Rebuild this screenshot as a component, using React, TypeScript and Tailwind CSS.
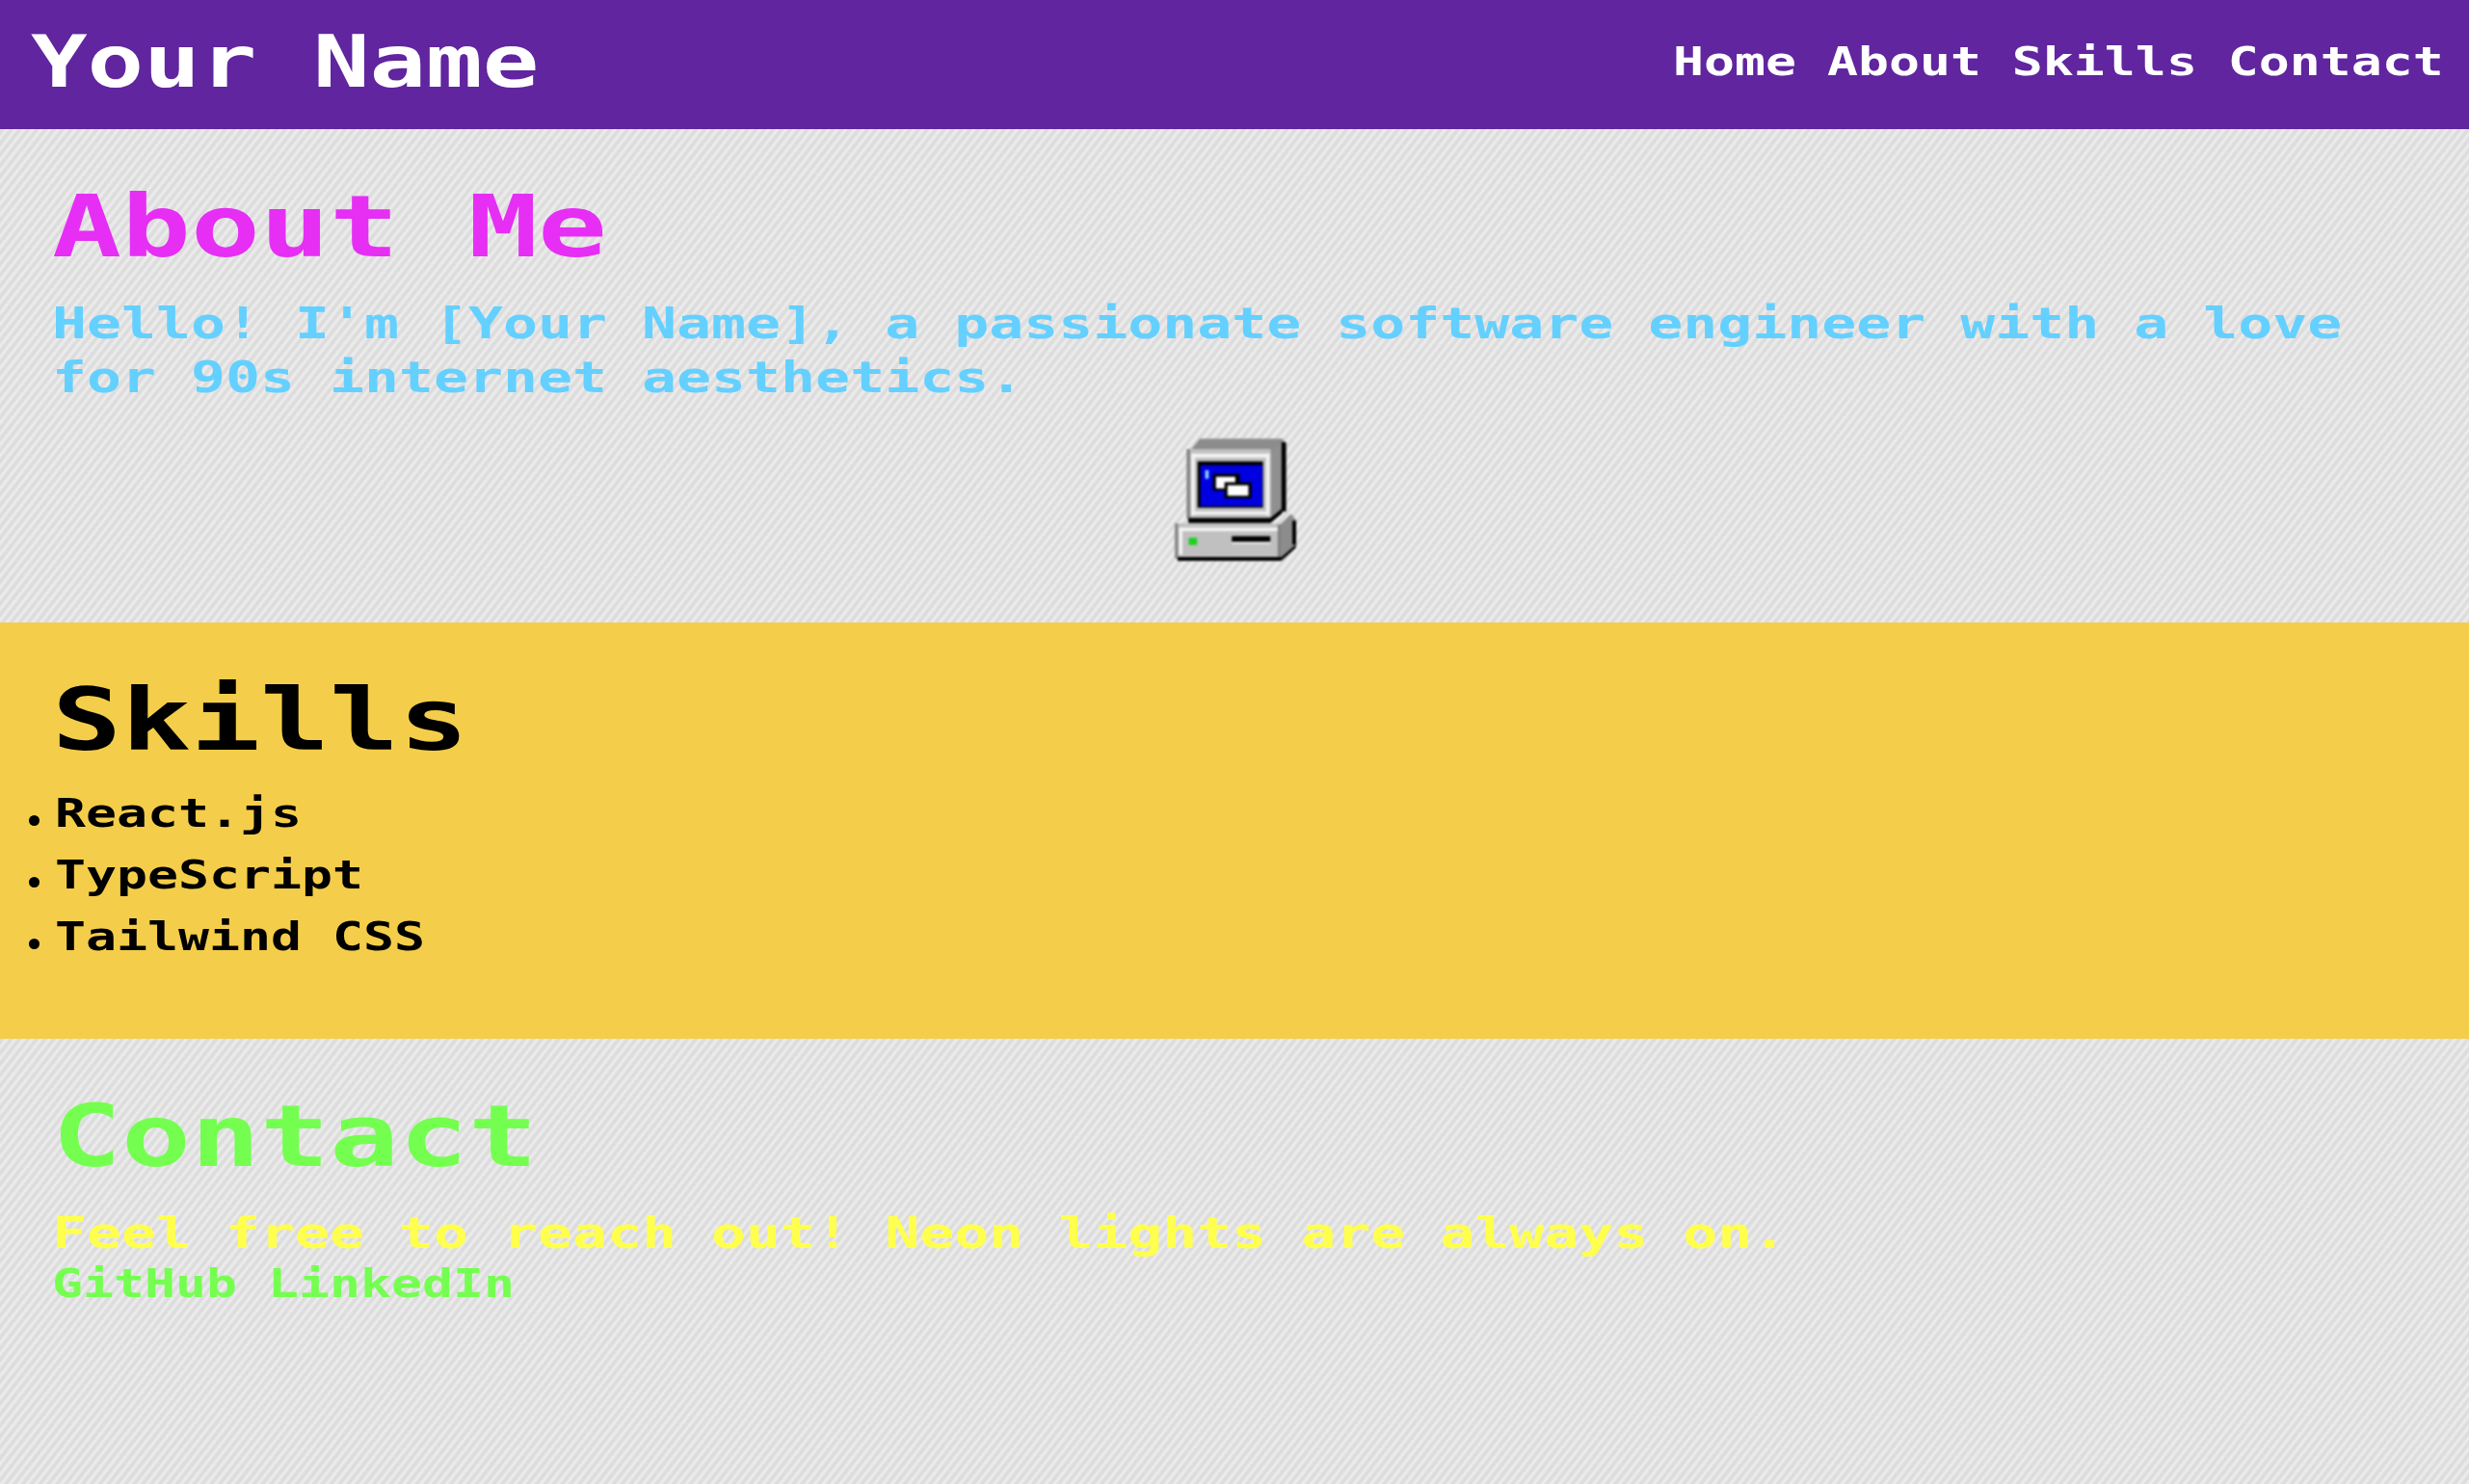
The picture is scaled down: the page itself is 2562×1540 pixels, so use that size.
const pixelFont = "font-['DejaVu_Sans_Mono','Liberation_Mono',monospace] font-bold";

function ComputerIcon() {
  return (
    <svg viewBox="0 0 32 32" className="w-[128px] h-[128px] blur-[1.2px]">
      {/* monitor */}
      <polygon points="7,0.3 28.5,0.3 29,1.5 25.5,4 4,4" fill="#8c8c8c" />
      <polygon points="25.3,3.6 28.3,1.2 28.3,18.8 25.3,21.5" fill="#909090" />
      <rect x="28.2" y="1.2" width="1.2" height="18" fill="#000" />
      <rect x="3.6" y="3" width="21.8" height="18" fill="#c0c0c0" />
      <rect x="3.6" y="3" width="0.9" height="18" fill="#868686" />
      <rect x="4.8" y="4.2" width="20.3" height="1" fill="#f4f4f4" />
      <rect x="4.8" y="4.2" width="0.9" height="16" fill="#f4f4f4" />
      <rect x="24.2" y="4.2" width="0.9" height="16" fill="#f4f4f4" />
      <rect x="4.8" y="19.2" width="20" height="0.8" fill="#f4f4f4" />
      <rect x="6.4" y="6.2" width="17" height="12" fill="#000" />
      <rect x="7.2" y="7.2" width="16" height="10.6" fill="#0000e0" />
      <rect x="8.4" y="8.5" width="0.9" height="2.2" fill="#8ad4ff" />
      <rect x="10.4" y="9.4" width="7" height="4.4" fill="#000" />
      <rect x="11.2" y="10.2" width="5" height="3" fill="#fff" />
      <rect x="13.4" y="11.6" width="7" height="4.2" fill="#000" />
      <rect x="14.2" y="12.4" width="5.4" height="2.7" fill="#fff" />
      <polygon points="4,20.9 25.3,20.9 28.4,18.4 28.4,19.6 25.3,22.2 4,22.2" fill="#000" />
      {/* base */}
      <polygon points="27.8,22.6 30.6,19.8 32,21.4 32,28 28,31.6" fill="#8c8c8c" />
      <rect x="31" y="21.6" width="1" height="6.2" fill="#000" />
      <polygon points="28,31.2 31.9,27.8 31.9,28.6 28.3,31.9" fill="#000" />
      <rect x="0.5" y="22.3" width="27.5" height="9" fill="#c0c0c0" />
      <rect x="0.5" y="22.3" width="0.9" height="9" fill="#8a8a8a" />
      <rect x="1.6" y="23.4" width="26.2" height="0.9" fill="#f4f4f4" />
      <rect x="1.6" y="23.4" width="0.9" height="7" fill="#f4f4f4" />
      <rect x="27.2" y="22.6" width="0.8" height="8.4" fill="#808080" />
      <rect x="1.2" y="31" width="27" height="1" fill="#000" />
      <rect x="4.1" y="26" width="2.2" height="1.9" fill="#20d020" />
      <rect x="15.3" y="25.6" width="10" height="1.5" fill="#000" />
      <rect x="15.3" y="27.1" width="10" height="0.5" fill="#f0f0f0" />
    </svg>
  );
}

function SkillItem({ name }: { name: string }) {
  return (
    <li className="flex items-center">
      <span className="w-[11px] h-[11px] mt-[14px] mr-4 rounded-full bg-black" />
      <span className="origin-left scale-x-[1.329]">{name}</span>
    </li>
  );
}

export default function App() {
  return (
    <div className={`min-h-screen overflow-hidden bg-[repeating-linear-gradient(128deg,#dcdcdc_0px,#dddddd_2px,#ebebeb_3.5px,#ebebeb_5px,#dcdcdc_7px)] ${pixelFont}`}>
      <header className="flex justify-between items-center bg-[#60259f] text-white pt-6 pb-[30px] pl-8 pr-[26px]">
        <h1 className="text-[74px] leading-[80px] font-bold whitespace-nowrap origin-left scale-x-[1.315]">Your Name</h1>
        <nav className="flex gap-6 text-[40px] leading-[40px] origin-right scale-x-[1.329]">
          <a>Home</a>
          <a>About</a>
          <a>Skills</a>
          <a>Contact</a>
        </nav>
      </header>

      <section className="h-[512px] pt-[53px] px-[54px]">
        <h2 className="w-fit text-[89px] leading-[96px] font-bold text-[#e62ef5] origin-left scale-x-[1.344]">About Me</h2>
        <p className="w-[1860px] mt-[25px] text-[45px] leading-[56px] text-[#64d0ff] origin-left scale-x-[1.329]">
          Hello! I'm [Your Name], a passionate software engineer with a love for 90s internet aesthetics.
        </p>
        <div className="flex justify-center mt-[34px]">
          <ComputerIcon />
        </div>
      </section>

      <section className="h-[432px] bg-[#f4ce4a] text-black pt-[53px] px-[54px]">
        <h2 className="w-fit text-[89px] leading-[96px] font-bold origin-left scale-x-[1.344]">Skills</h2>
        <ul className="mt-[17px] -ml-6 text-[40px] leading-[64px]">
          <SkillItem name="React.js" />
          <SkillItem name="TypeScript" />
          <SkillItem name="Tailwind CSS" />
        </ul>
      </section>

      <section className="pt-[53px] px-[54px]">
        <h2 className="w-fit text-[89px] leading-[96px] font-bold text-[#74ff50] origin-left scale-x-[1.344]">Contact</h2>
        <p className="w-fit mt-[25px] text-[45px] leading-[56px] text-[#ffff4d] whitespace-nowrap origin-left scale-x-[1.329]">
          Feel free to reach out! Neon lights are always on.
        </p>
        <div className="flex w-fit gap-6 mt-1 text-[40px] leading-[40px] text-[#74ff50] origin-left scale-x-[1.329]">
          <a>GitHub</a>
          <a>LinkedIn</a>
        </div>
      </section>
    </div>
  );
}
